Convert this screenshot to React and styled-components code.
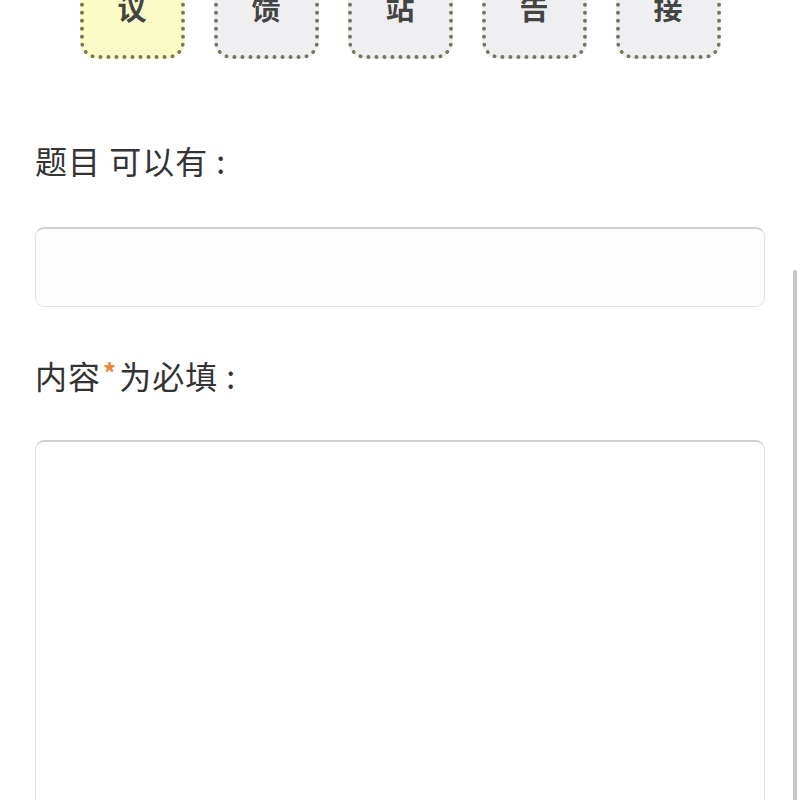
import styled, { createGlobalStyle } from 'styled-components';

const GlobalStyle = createGlobalStyle`
  html, body {
    margin: 0;
    padding: 0;
    background: #ffffff;
    overflow: hidden;
  }
  body {
    font-family: "Noto Sans CJK SC", "Noto Sans", sans-serif;
    color: #333333;
  }
  * {
    box-sizing: border-box;
  }
`;

const tabs = [
  { id: 'suggest', text: '议', active: true },
  { id: 'feedback', text: '馈' },
  { id: 'site', text: '站' },
  { id: 'notice', text: '告' },
  { id: 'link', text: '接' },
];

const Page = styled.div`
  position: relative;
  width: 800px;
  height: 800px;
  overflow: hidden;
  display: flex;
  flex-direction: column;
  padding: 0 35px;

  & > * {
    flex-shrink: 0;
  }
`;

//# 상단 탭 (위쪽이 잘려 보임)
const TabBar = styled.div`
  display: flex;
  justify-content: center;
  gap: 29px;
  margin-top: -30px;
`;

const Tab = styled.div`
  width: 105px;
  height: 89px;
  display: flex;
  justify-content: center;
  align-items: flex-start;
  padding-top: 16px;
  border: 4px dotted #77775e;
  border-radius: 17px;
  background: ${(props) => (props.active ? '#fbfbc6' : '#efeff1')};
  font-size: 29px;
  line-height: 34px;
  font-weight: 700;
  color: #444444;
`;

const Label = styled.div`
  font-size: 32px;
  line-height: 40px;
  letter-spacing: 1px;
  color: #333333;
  margin-top: ${(props) => props.top}px;
  margin-bottom: ${(props) => props.bottom}px;
`;

const Colon = styled.span`
  margin-left: 8px;
`;

const Star = styled.span`
  color: #ee8436;
  font-size: 26px;
  font-weight: 700;
  vertical-align: 6px;
  margin: 0 2px;
`;

const TextInput = styled.input`
  display: block;
  width: 730px;
  height: 80px;
  border: 1px solid #e2e2e2;
  border-top: 2px solid #d0d0d0;
  border-radius: 9px;
  background: #fdfdfd;
  outline: none;
  font-size: 28px;
  padding: 0 16px;
`;

const TextArea = styled.textarea`
  display: block;
  width: 730px;
  height: 420px;
  border: 1px solid #e2e2e2;
  border-top: 2px solid #d0d0d0;
  border-radius: 9px;
  background: #ffffff;
  outline: none;
  resize: none;
  font-size: 28px;
  padding: 16px;
`;

//# 스크롤 표시줄 (콘텐츠 위에 겹침)
const ScrollThumb = styled.div`
  position: absolute;
  right: 3px;
  top: 270px;
  width: 4px;
  height: 560px;
  border-radius: 2px;
  background: #c6c6c6;
`;

export default function App() {
  return (
    <>
      <GlobalStyle />
      <Page>
        <TabBar>
          {tabs.map((t) => (
            <Tab key={t.id} active={t.active}>
              {t.text}
            </Tab>
          ))}
        </TabBar>
        <Label top={81} bottom={47}>
          题目 可以有<Colon>:</Colon>
        </Label>
        <TextInput type="text" />
        <Label top={45} bottom={45}>
          内容<Star>*</Star>为必填<Colon>:</Colon>
        </Label>
        <TextArea />
        <ScrollThumb />
      </Page>
    </>
  );
}
